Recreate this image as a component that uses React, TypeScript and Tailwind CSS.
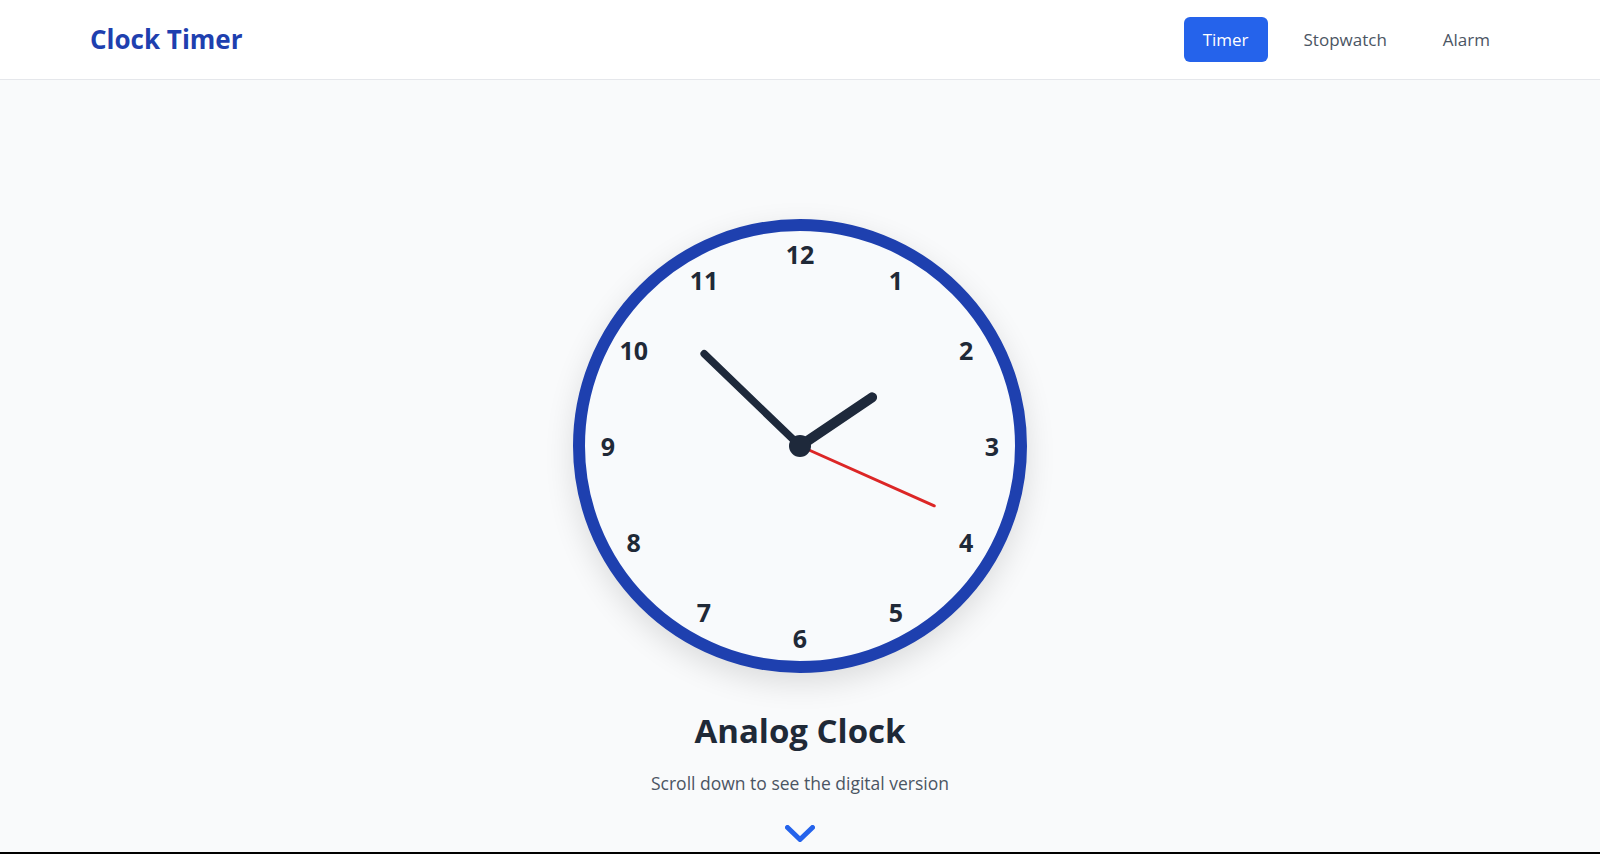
import React from "react";

const font = { fontFamily: '"Open Sans", "Noto Sans", sans-serif' };

const hours = [12, 1, 2, 3, 4, 5, 6, 7, 8, 9, 10, 11];

const Hand = ({ angle, length, width, color }: { angle: number; length: number; width: number; color: string }) => {
  const rad = (angle * Math.PI) / 180;
  const x2 = 215 + Math.sin(rad) * length;
  const y2 = 215 - Math.cos(rad) * length;
  return <line x1={215} y1={215} x2={x2} y2={y2} stroke={color} strokeWidth={width} strokeLinecap="round" />;
};

const AnalogClock = () => {
  const h = 1;
  const m = 52;
  const s = 19;
  const hourAngle = (h % 12) * 30 + m * 0.5;
  const minuteAngle = m * 6 + s * 0.1;
  const secondAngle = s * 6;

  return (
    <div className="relative w-[454px] h-[454px] rounded-full border-[12px] border-[#1e40af] bg-[#f8fafc] shadow-[0_10px_30px_rgba(0,0,0,0.12)]">
      {hours.map((n, i) => {
        const rad = (i * 30 * Math.PI) / 180;
        const x = 215 + Math.sin(rad) * 192;
        const y = 215 - Math.cos(rad) * 192;
        return (
          <span
            key={n}
            className="absolute -translate-x-1/2 -translate-y-1/2 text-[25px] font-bold leading-none text-[#1f2937]"
            style={{ left: x, top: y }}
          >
            {n}
          </span>
        );
      })}
      <svg className="absolute inset-0" width={430} height={430} viewBox="0 0 430 430">
        <Hand angle={hourAngle} length={87} width={10} color="#1e293b" />
        <Hand angle={minuteAngle} length={133} width={7.5} color="#1e293b" />
        <Hand angle={secondAngle} length={147} width={3} color="#dc2626" />
        <circle cx={215} cy={215} r={11} fill="#1e293b" />
      </svg>
    </div>
  );
};

export default function App() {
  return (
    <div className="min-h-screen bg-[#f9fafb]" style={font}>
      <header className="h-[80px] bg-white border-b border-gray-200">
        <div className="h-full px-[90px] flex items-center justify-between">
          <h1 className="text-[26px] font-bold text-[#1e40af]">Clock Timer</h1>
          <nav className="flex items-center gap-4">
            <button className="h-[45px] px-[19px] rounded-md bg-[#2563eb] text-white text-[17px]">Timer</button>
            <button className="h-[45px] px-5 rounded-md text-[#4b5563] text-[17px]">Stopwatch</button>
            <button className="h-[45px] px-5 rounded-md text-[#4b5563] text-[17px]">Alarm</button>
          </nav>
        </div>
      </header>
      <section className="h-[772px] flex flex-col items-center pt-[139px]">
        <AnalogClock />
        <h2 className="mt-[38px] text-[33px] font-bold leading-10 text-[#1f2937]">Analog Clock</h2>
        <p className="mt-[20px] text-[17.5px] leading-6 text-[#4b5563]">Scroll down to see the digital version</p>
        <svg className="mt-[30px]" width="30" height="17" viewBox="0 0 30 17">
          <polyline points="2.5,2.5 15,14.5 27.5,2.5" fill="none" stroke="#2563eb" strokeWidth="5" strokeLinecap="round" strokeLinejoin="round" />
        </svg>
      </section>
      <div className="h-[2px] bg-black" />
    </div>
  );
}
